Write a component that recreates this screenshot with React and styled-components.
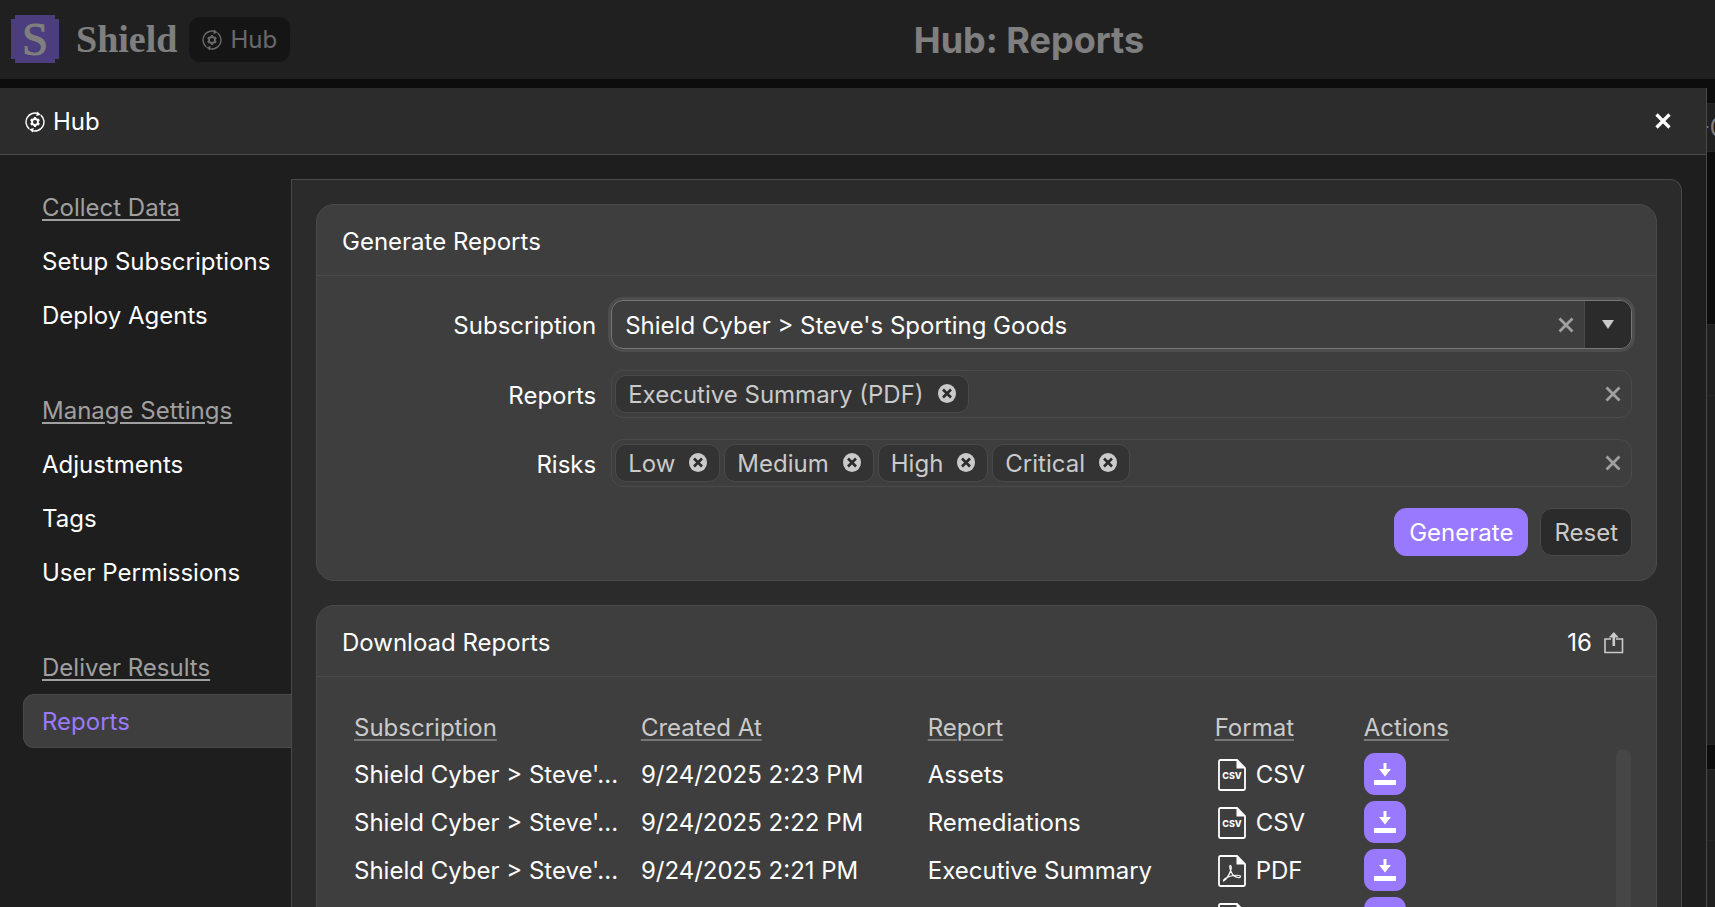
import React, { useState } from "react";
import styled, { createGlobalStyle, css } from "styled-components";

const Global = createGlobalStyle`
  * { box-sizing: border-box; }
  html, body { height: 100%; }
  body {
    margin: 0;
    overflow: hidden;
    background: #1a1a1a;
    color: #fff;
    font-family: Inter, "Liberation Sans", sans-serif;
    font-size: 24px;
    line-height: 30px;
  }
  button, input { font: inherit; color: inherit; }
  button { cursor: pointer; }
`;

const Page = styled.div`
  height: 100vh;
  display: flex;
  flex-direction: column;
  overflow: hidden;
`;

const TopBar = styled.header`
  flex: none;
  display: grid;
  grid-template-columns: 20% 1fr;
  align-items: center;
  height: 79px;
  padding-bottom: 1px;
  background: #404040;
`;

const Brand = styled.div`
  display: flex;
  align-items: center;
  padding-left: 11px;
`;

const BrandName = styled.span`
  margin: 0 11px 0 17px;
  font: bold 38px/44px "Liberation Serif", serif;
`;

const HubButton = styled.button`
  display: flex;
  align-items: center;
  gap: 8px;
  height: 47px;
  padding: 2px 13px 0;
  border: 1px solid #404040;
  border-radius: 12px;
  background: #2b2b2b;
  color: #d0d0d0;
`;

const PageTitle = styled.h1`
  margin: 0;
  padding-top: 2px;
  text-align: center;
  font-size: 36px;
  line-height: 44px;
  font-weight: 700;
`;

const Backdrop = styled.div`
  position: fixed;
  inset: 0;
  background: rgba(0, 0, 0, 0.5);
`;

const Underlay = styled.main`
  flex: 1;
  min-height: 0;
  display: flex;
  flex-direction: column;
  gap: 24px;
  padding-top: 24px;
  overflow: hidden;
`;

const UnderPanel = styled.section`
  flex: none;
  height: ${(p) => p.$height}px;
  border-top: 1px solid #4a4a4a;
  border-bottom: 1px solid #4a4a4a;
  background: #404040;
`;

const UnderSummary = styled(UnderPanel)`
  display: flex;
  align-items: center;
  justify-content: flex-end;
  margin-bottom: 148px;
`;

const UnderValue = styled.span`
  margin-right: -10px;
`;

const UnderHead = styled.div`
  height: 71px;
  border-bottom: 1px solid #4a4a4a;
`;

const Dialog = styled.section`
  position: fixed;
  inset: 88px 8px 0 0;
  display: flex;
  flex-direction: column;
  border-right: 1px solid #4a4a4a;
  background: #1e1e1e;
`;

const DialogHeader = styled.header`
  flex: none;
  display: flex;
  align-items: center;
  justify-content: space-between;
  height: 67px;
  padding: 0 35px 0 25px;
  border-bottom: 1px solid #4a4a4a;
  background: #2c2c2c;
`;

const DialogTitle = styled.h2`
  display: flex;
  align-items: center;
  gap: 8px;
  margin: 0;
  padding-top: 2px;
  font-size: 24px;
  font-weight: 400;
`;

const IconButton = styled.button`
  display: flex;
  align-items: center;
  justify-content: center;
  flex: none;
  padding: 0;
  border: 0;
  background: none;
  color: ${(p) => p.$color || "#cacaca"};
`;

const DialogBody = styled.div`
  flex: 1;
  min-height: 0;
  display: flex;
  padding: 24px 24px 0 0;
`;

const SideNav = styled.nav`
  flex: none;
  display: flex;
  flex-direction: column;
  gap: 41px;
  width: 291px;
  padding: 1px 0 0 23px;
`;

const NavGroup = styled.div`
  display: flex;
  flex-direction: column;
`;

const navItem = css`
  height: 54px;
  margin: 0;
  padding: 12px 0 10px 18px;
  border: 1px solid transparent;
  font-size: 24px;
  font-weight: 400;
  white-space: nowrap;
`;

const NavHeading = styled.h3`
  ${navItem}
  color: #a0a0a0;
  text-decoration: underline;
  text-underline-offset: 3px;
  text-decoration-thickness: 2px;
`;

const NavLink = styled.a`
  ${navItem}
  color: #fff;
  text-decoration: none;
  ${(p) =>
    p.$active &&
    css`
      border-color: #4a4a4a;
      border-right: 0;
      border-radius: 11px 0 0 11px;
      background: #3e3e3e;
      color: #997aff;
    `}
`;

const Content = styled.div`
  flex: 1;
  min-width: 0;
  display: flex;
  flex-direction: column;
  gap: 24px;
  padding: 24px 24px 0;
  border: 1px solid #4a4a4a;
  border-bottom: 0;
  border-top-right-radius: 12px;
  background: #2b2b2b;
  overflow: hidden;
`;

const Card = styled.section`
  flex: none;
  border: 1px solid #4a4a4a;
  border-radius: 18px;
  background: #3e3e3e;
`;

const CardHeader = styled.header`
  display: flex;
  align-items: center;
  justify-content: space-between;
  height: 71px;
  padding: 3px 32px 0 25px;
  border-bottom: 1px solid #4a4a4a;
`;

const CardTitle = styled.h3`
  margin: 0;
  font-size: 24px;
  font-weight: 400;
`;

const CountGroup = styled.div`
  display: flex;
  align-items: center;
  gap: 12px;
`;

const Form = styled.form`
  display: flex;
  flex-direction: column;
  gap: 21px;
  padding: 24px;
`;

const FormRow = styled.div`
  display: grid;
  grid-template-columns: 1fr 4fr;
  column-gap: 15px;
  align-items: center;
`;

const FieldLabel = styled.label`
  padding-top: 3px;
  text-align: right;
`;

const Field = styled.div`
  display: flex;
  align-items: center;
  gap: 4px;
  height: 48px;
  padding: 0 10px 0 3px;
  border: 1px solid #4a4a4a;
  border-radius: 12px;
`;

const ComboField = styled(Field)`
  height: 49px;
  padding: 0;
  border-color: #777;
  box-shadow: 0 0 0 3px #4d4d4d;
  overflow: hidden;
`;

const TextInput = styled.input`
  flex: 1;
  min-width: 0;
  height: 100%;
  padding: 1px 0 0 ${(p) => p.$indent || 0}px;
  border: 0;
  outline: 0;
  background: none;
`;

const DropButton = styled(IconButton)`
  width: 47px;
  height: 100%;
  margin-left: 6px;
  border-left: 1px solid #4a4a4a;
  background: #2b2b2b;
`;

const Chip = styled.span`
  flex: none;
  display: flex;
  align-items: center;
  gap: 14px;
  height: 38px;
  padding: 2px 12px 0;
  border: 1px solid #4a4a4a;
  border-radius: 11px;
  background: #333;
  color: #cacaca;
`;

const RemoveButton = styled(IconButton)`
  margin-bottom: 2px;
`;

const Buttons = styled.div`
  display: flex;
  justify-content: flex-end;
  gap: 12px;
`;

const ActionButton = styled.button`
  height: 48px;
  padding: 2px ${(p) => (p.$primary ? 14 : 13)}px 0;
  border: 1px solid ${(p) => (p.$primary ? "#997aff" : "#4a4a4a")};
  border-radius: 12px;
  background: ${(p) => (p.$primary ? "#997aff" : "#2b2b2b")};
  color: ${(p) => (p.$primary ? "#fff" : "#cacaca")};
`;

const TableArea = styled.div`
  display: flex;
  padding: 24px 25px 0 24px;
`;

const TableWrap = styled.div`
  flex: 1;
  min-width: 0;
`;

const Table = styled.table`
  width: 100%;
  table-layout: fixed;
  border-collapse: collapse;
`;

const Col = styled.col`
  width: ${(p) => p.$width};
`;

const Th = styled.th`
  height: 49px;
  padding: 5px 0 0 13px;
  text-align: left;
  font-weight: 400;
  color: #cacaca;
  text-decoration: underline #777 2px;
  text-underline-offset: 3px;
`;

const Td = styled.td`
  height: 48px;
  padding: ${(p) => (p.$control ? 0 : 2)}px 6px 0 13px;
  overflow: hidden;
  text-overflow: ellipsis;
  white-space: nowrap;
`;

const Format = styled.span`
  display: flex;
  align-items: center;
  gap: 10px;
  padding-left: 3px;
`;

const DownloadButton = styled(IconButton)`
  width: 42px;
  height: 42px;
  border-radius: 11px;
  background: #997aff;
  color: #fff;
`;

const ScrollTrack = styled.div`
  flex: none;
  width: 15px;
  margin-top: 48px;
  border-radius: 8px 8px 0 0;
  background: #464646;
`;

const LogoSvg = styled.svg`
  flex: none;
  overflow: visible;
`;

const HubIcon = () => (
  <svg width="20" height="22" viewBox="0 0 20 22" fill="none" stroke="currentColor" aria-hidden="true">
    <path d="M4.2 17.9A9 9 0 0 1 13.4 2.7M15.8 4.1A9 9 0 0 1 6.6 19.3" strokeWidth="1.4" />
    <path d="M12.2 0.4l3.6 3.4-4.6 1.1zM7.8 21.6l-3.6-3.4 4.6-1.1z" fill="currentColor" stroke="none" />
    <circle cx="10" cy="11" r="3" strokeWidth="1.9" />
    <path d="M10 6v2M10 14v2M5.7 8.5l1.7 1M12.6 12.5l1.7 1M5.7 13.5l1.7-1M12.6 9.5l1.7-1" strokeWidth="2.2" />
  </svg>
);

const Logo = () => (
  <LogoSvg width="48" height="48" viewBox="0 0 48 48" role="img" aria-label="Shield logo">
    <path d="M4 0h40v4h4v40h-4v4H4v-4H0V4h4z" fill="#997aff" />
    <text x="24" y="40" textAnchor="middle" fontFamily="Liberation Serif, serif" fontSize="47" fill="#fff" stroke="#fff" strokeWidth="1">
      S
    </text>
  </LogoSvg>
);

const Cross = ({ weight = 2.8 }) => (
  <svg width="16" height="16" viewBox="0 0 16 16" stroke="currentColor" strokeWidth={weight} aria-hidden="true">
    <path d="M1.500 1.500l13 13M14.500 1.500l-13 13" />
  </svg>
);

const RemoveIcon = () => (
  <svg width="18" height="20" viewBox="0 0 18 20" aria-hidden="true">
    <ellipse cx="9" cy="9.500" rx="9" ry="9.400" fill="#cacaca" />
    <path d="M5 5.500l8 8M13 5.500l-8 8" stroke="#2b2b2b" strokeWidth="2.600" />
  </svg>
);

const ShareIcon = () => (
  <svg width="20" height="22" viewBox="0 0 20 22" fill="none" stroke="currentColor" aria-hidden="true">
    <path d="M7 7H1v13.5h17.5V7H12" strokeWidth="1.6" />
    <path d="M9.8 14V4" strokeWidth="2.6" />
    <path d="M4.8 5.5L9.8 0l5 5.5z" fill="currentColor" stroke="none" />
  </svg>
);

const FileIcon = ({ type }) => (
  <svg width="28" height="32" viewBox="0 0 28 32" fill="none" stroke="#fff" aria-hidden="true">
    <path d="M19 1H2.5Q1 1 1 2.5v27Q1 31 2.5 31h23q1.500 0 1.500-1.500V9z" strokeWidth="1.8" />
    <path d="M18.500 1v8.500H27z" fill="#fff" stroke="none" />
    {type === "CSV" ? (
      <text x="14" y="20" textAnchor="middle" fontFamily="Inter, sans-serif" fontWeight="800" fontSize="9" fill="#fff" stroke="none">
        CSV
      </text>
    ) : (
      <path d="M5.500 26c2-.5 6-6 7.500-11.500.6-2.800-.2-4.500-.9-4-1.200 1 1 8 3.700 10.200 2.500 2 6.700 2.500 6.700.8s-5.500-1.500-9.500-.5-8 3.500-7.500 5z" strokeWidth="1.200" />
    )}
  </svg>
);

const DownloadIcon = () => (
  <svg width="22" height="22" viewBox="0 0 22 22" fill="currentColor" aria-hidden="true">
    <path d="M9.500 0h3v6h4.500l-6 7.500L5 6h4.500zM0 17h22v5H0z" />
  </svg>
);

const NAV = [
  ["Collect Data", ["Setup Subscriptions", "Deploy Agents"]],
  ["Manage Settings", ["Adjustments", "Tags", "User Permissions"]],
  ["Deliver Results", ["Reports"]],
];

const ROWS = [
  ["9/24/2025 2:23 PM", "Assets", "CSV"],
  ["9/24/2025 2:22 PM", "Remediations", "CSV"],
  ["9/24/2025 2:21 PM", "Executive Summary", "PDF"],
  ["9/24/2025 2:20 PM", "Technical Summary", "PDF"],
];

const SUBSCRIPTION = "Shield Cyber > Steve's Sporting Goods";

const shorten = (text, length) => (text.length > length ? `${text.slice(0, length)}...` : text);

function ChipField({ id, label, initial }) {
  const [items, setItems] = useState(initial);
  return (
    <FormRow>
      <FieldLabel htmlFor={id}>{label}</FieldLabel>
      <Field>
        {items.map((item) => (
          <Chip key={item}>
            {item}
            <RemoveButton type="button" aria-label={`Remove ${item}`} onClick={() => setItems(items.filter((i) => i !== item))}>
              <RemoveIcon />
            </RemoveButton>
          </Chip>
        ))}
        <TextInput id={id} />
        <IconButton type="button" aria-label={`Clear ${label}`} $color="#a0a0a0" onClick={() => setItems([])}>
          <Cross />
        </IconButton>
      </Field>
    </FormRow>
  );
}

export default function App() {
  const [subscription, setSubscription] = useState(SUBSCRIPTION);
  return (
    <Page>
      <Global />
      <TopBar>
        <Brand>
          <Logo />
          <BrandName>Shield</BrandName>
          <HubButton type="button">
            <HubIcon />
            Hub
          </HubButton>
        </Brand>
        <PageTitle>Hub: Reports</PageTitle>
      </TopBar>
      <Underlay>
        <UnderSummary $height={49}>
          <UnderValue>-0</UnderValue>
        </UnderSummary>
        <UnderPanel $height={421}>
          <UnderHead />
        </UnderPanel>
        <UnderPanel $height={300}>
          <UnderHead />
        </UnderPanel>
      </Underlay>
      <Backdrop />
      <Dialog role="dialog" aria-labelledby="dialog-title">
        <DialogHeader>
          <DialogTitle id="dialog-title">
            <HubIcon />
            Hub
          </DialogTitle>
          <IconButton type="button" aria-label="Close" $color="#fff">
            <Cross weight={3.2} />
          </IconButton>
        </DialogHeader>
        <DialogBody>
          <SideNav>
            {NAV.map(([heading, links]) => (
              <NavGroup key={heading}>
                <NavHeading>{heading}</NavHeading>
                {links.map((link) => (
                  <NavLink key={link} href="#" $active={link === "Reports"}>
                    {link}
                  </NavLink>
                ))}
              </NavGroup>
            ))}
          </SideNav>
          <Content>
            <Card>
              <CardHeader>
                <CardTitle>Generate Reports</CardTitle>
              </CardHeader>
              <Form onSubmit={(e) => e.preventDefault()}>
                <FormRow>
                  <FieldLabel htmlFor="subscription">Subscription</FieldLabel>
                  <ComboField>
                    <TextInput
                      id="subscription"
                      role="combobox"
                      aria-expanded="false"
                      $indent={13}
                      value={subscription}
                      onChange={(e) => setSubscription(e.target.value)}
                    />
                    <IconButton type="button" aria-label="Clear Subscription" $color="#a0a0a0" onClick={() => setSubscription("")}>
                      <Cross />
                    </IconButton>
                    <DropButton type="button" aria-label="Show subscriptions">
                      <svg width="12" height="9" viewBox="0 0 12 9" fill="currentColor" aria-hidden="true">
                        <path d="M0 0h12L6 9z" />
                      </svg>
                    </DropButton>
                  </ComboField>
                </FormRow>
                <ChipField id="reports" label="Reports" initial={["Executive Summary (PDF)"]} />
                <ChipField id="risks" label="Risks" initial={["Low", "Medium", "High", "Critical"]} />
                <Buttons>
                  <ActionButton type="submit" $primary>
                    Generate
                  </ActionButton>
                  <ActionButton type="reset">Reset</ActionButton>
                </Buttons>
              </Form>
            </Card>
            <Card>
              <CardHeader>
                <CardTitle>Download Reports</CardTitle>
                <CountGroup>
                  <span>16</span>
                  <IconButton type="button" aria-label="Export">
                    <ShareIcon />
                  </IconButton>
                </CountGroup>
              </CardHeader>
              <TableArea>
                <TableWrap>
                  <Table>
                    <colgroup>
                      <Col $width="22.5%" />
                      <Col $width="22.5%" />
                      <Col $width="22.5%" />
                      <Col $width="11.7%" />
                      <Col />
                    </colgroup>
                    <thead>
                      <tr>
                        {["Subscription", "Created At", "Report", "Format", "Actions"].map((h) => (
                          <Th key={h} scope="col">
                            {h}
                          </Th>
                        ))}
                      </tr>
                    </thead>
                    <tbody>
                      {ROWS.map(([created, report, format]) => (
                        <tr key={created}>
                          <Td title={SUBSCRIPTION}>{shorten(SUBSCRIPTION, 21)}</Td>
                          <Td>{created}</Td>
                          <Td>{report}</Td>
                          <Td>
                            <Format>
                              <FileIcon type={format} />
                              {format}
                            </Format>
                          </Td>
                          <Td $control>
                            <DownloadButton type="button" aria-label={`Download ${report}`}>
                              <DownloadIcon />
                            </DownloadButton>
                          </Td>
                        </tr>
                      ))}
                    </tbody>
                  </Table>
                </TableWrap>
                <ScrollTrack />
              </TableArea>
            </Card>
          </Content>
        </DialogBody>
      </Dialog>
    </Page>
  );
}
